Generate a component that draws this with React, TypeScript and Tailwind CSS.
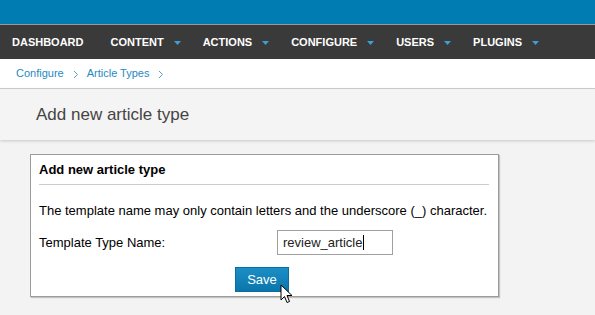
import React from 'react';

const Caret = () => (
  <svg width="7" height="4" viewBox="0 0 7 4" className="ml-[10px] mt-[1px]">
    <path d="M0 0h7L3.5 4z" fill="#3aa0d5" />
  </svg>
);

const Crumb = () => (
  <svg width="6" height="9" viewBox="0 0 6 9" className="ml-[9px] mr-[8px] mt-[2px]">
    <path d="M1 1l3.5 3.5L1 8" fill="none" stroke="#5a9cc4" strokeWidth="1" />
  </svg>
);

const NAV = [
  { label: 'CONTENT', menu: true },
  { label: 'ACTIONS', menu: true },
  { label: 'CONFIGURE', menu: true },
  { label: 'USERS', menu: true },
  { label: 'PLUGINS', menu: true },
];

export default function App() {
  return (
    <div className="w-[595px] h-[315px] overflow-hidden bg-[#f3f3f3] font-['Liberation_Sans',Arial,sans-serif] relative">
      <div className="h-[24px] bg-[#007cb2]" />
      <div className="h-[1px] bg-[#9a9a9a]" />
      <nav className="h-[34px] bg-[#3a3a3a] flex items-center pl-[12px] text-[11px] font-bold text-white">
        <span className="mr-[27px]">DASHBOARD</span>
        {NAV.map((n) => (
          <div key={n.label} className="flex items-center mr-[22px]">
            <span>{n.label}</span>
            {n.menu && <Caret />}
          </div>
        ))}
      </nav>
      <div className="h-[30px] bg-white flex items-center pl-[16px] text-[11px] text-[#1f8ac2] border-b border-[#cfcfcf] shadow-[0_1px_2px_rgba(0,0,0,0.12)] relative">
        <span>Configure</span>
        <Crumb />
        <span>Article Types</span>
        <Crumb />
      </div>
      <div className="h-[51px] bg-[#f4f4f4] flex items-center pl-[36px] text-[17px] text-[#444] shadow-[0_1px_3px_rgba(0,0,0,0.18)] relative">
        Add new article type
      </div>
      <div className="pt-[14px] pl-[30px]">
        <div className="w-[469px] h-[143px] bg-white border border-[#9c9c9c] shadow-[1px_1px_1px_rgba(0,0,0,0.2)] px-[8px]">
          <div className="h-[30px] flex items-center text-[13px] font-bold text-black border-b border-[#cccccc] w-[450px] pt-[1px]">
            Add new article type
          </div>
          <p className="mt-[18px] text-[13px] text-black leading-[15px]">
            The template name may only contain letters and the underscore (_) character.
          </p>
          <div className="mt-[12px] flex items-center">
            <span className="text-[13px] text-black w-[238px]">Template Type Name:</span>
            <div className="w-[116px] h-[25px] border border-[#a0a0a0] flex items-center pl-[5px] text-[13px] text-[#222]">
              review_article<span className="inline-block w-[1px] h-[15px] bg-black ml-[1px]" />
            </div>
          </div>
          <div className="mt-[12px] pl-[196px]">
            <button className="w-[54px] h-[25px] bg-gradient-to-b from-[#1b8fc6] to-[#0a76ab] border border-[#0a6d9e] text-white text-[13px] font-['Liberation_Sans',Arial,sans-serif]">
              Save
            </button>
          </div>
        </div>
      </div>
      <svg
        width="14"
        height="20"
        viewBox="0 0 14 20"
        className="absolute left-[280px] top-[284px]"
      >
        <path
          d="M1 1v15l3.5-3.5 2.5 6 2.5-1-2.5-6H12z"
          fill="#fff"
          stroke="#000"
          strokeWidth="1"
          strokeLinejoin="round"
        />
      </svg>
    </div>
  );
}
